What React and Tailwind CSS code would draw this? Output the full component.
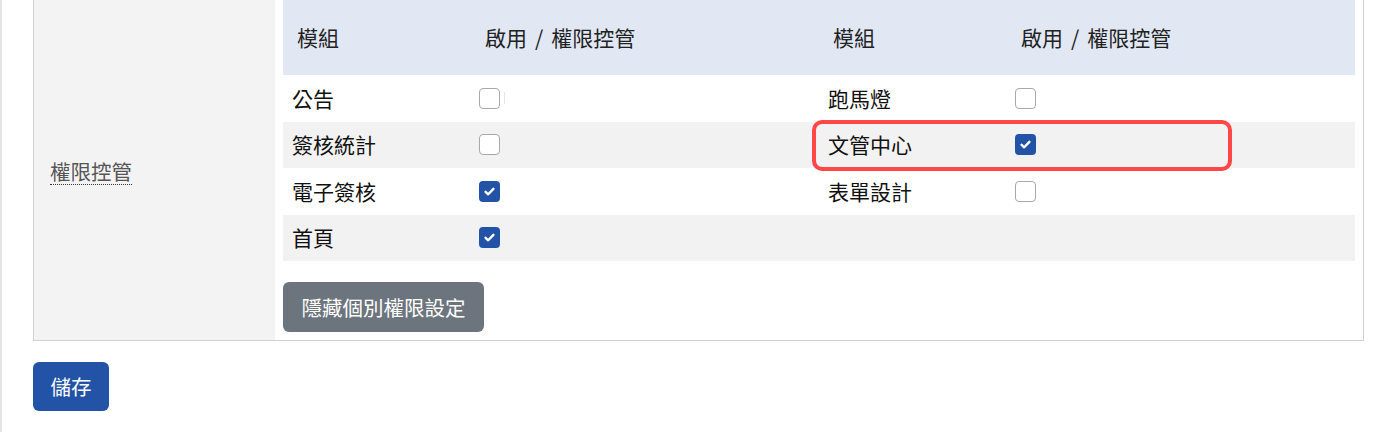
import React from "react";

const FONT = { fontFamily: '"Noto Sans CJK TC", "Noto Sans", sans-serif' };

function Box({ checked, caret }) {
  return (
    <div className="flex items-center">
      {checked ? (
        <span className="w-[21px] h-[21px] rounded-[4px] bg-[#2353a7] flex items-center justify-center">
          <svg width="13" height="13" viewBox="0 0 14 14" fill="none">
            <path d="M2.8 7.3l2.8 2.7 5.6-5.8" stroke="white" strokeWidth="2.6" strokeLinecap="round" strokeLinejoin="round" />
          </svg>
        </span>
      ) : (
        <span className="w-[21px] h-[21px] rounded-[4px] bg-white border border-[#a8a8a8]" />
      )}
      {caret && <span className="ml-[4px] w-px h-[12px] bg-[#e6e6e6]" />}
    </div>
  );
}

const rows = [
  { a: "公告", ac: false, caret: true, b: "跑馬燈", bc: false, bg: "bg-white" },
  { a: "簽核統計", ac: false, b: "文管中心", bc: true, bg: "bg-[#f2f2f2]" },
  { a: "電子簽核", ac: true, b: "表單設計", bc: false, bg: "bg-white" },
  { a: "首頁", ac: true, b: null, bg: "bg-[#f2f2f2]" },
];

export default function App() {
  return (
    <div className="w-[1400px] h-[432px] bg-white border-l-2 border-[#e3e3e3] pl-[31px] text-[21px] text-[#111]" style={FONT}>
      <div className="w-[1331px] flex border-x border-b border-[#d2d2d2]">
        <div className="w-[241px] bg-[#f3f3f3] flex items-center pl-[16px] pt-[3px]">
          <span className="text-[20.5px] text-[#555] leading-[25px] border-b border-dotted border-[#333]">權限控管</span>
        </div>
        <div className="flex-1 p-2 pt-0 relative">
          <div className="grid grid-cols-[188px_1fr_188px_1fr]">
            <div className="h-[75px] bg-[#e1e8f4] flex items-center pl-[14px] text-[#222]">模組</div>
            <div className="h-[75px] bg-[#e1e8f4] flex items-center pl-[14px] text-[#222]">啟用<span className="mx-[8px]">/</span>權限控管</div>
            <div className="h-[75px] bg-[#e1e8f4] flex items-center pl-[14px] text-[#222]">模組</div>
            <div className="h-[75px] bg-[#e1e8f4] flex items-center pl-[14px] text-[#222]">啟用<span className="mx-[8px]">/</span>權限控管</div>
            {rows.map((r, i) => (
              <React.Fragment key={i}>
                <div className={`h-[46.5px] ${r.bg} flex items-center pl-[9px]`}>{r.a}</div>
                <div className={`h-[46.5px] ${r.bg} flex items-center pl-[8px]`}>
                  <Box checked={r.ac} caret={r.caret} />
                </div>
                <div className={`h-[46.5px] ${r.bg} flex items-center pl-[9px]`}>{r.b}</div>
                <div className={`h-[46.5px] ${r.bg} flex items-center pl-[8px]`}>
                  {r.b && <Box checked={r.bc} />}
                </div>
              </React.Fragment>
            ))}
          </div>
          <button className="mt-[21px] w-[201px] h-[50px] rounded-[6px] bg-[#6c757d] text-white text-[20.5px] flex items-center justify-center">
            隱藏個別權限設定
          </button>
          <div className="absolute left-[537px] top-[120px] w-[420px] h-[51px] border-[4px] border-[#ff4747] rounded-[10px] pointer-events-none" />
        </div>
      </div>
      <button className="mt-[21px] w-[76px] h-[49px] rounded-[6px] bg-[#2353a7] text-white text-[20.5px] flex items-center justify-center">
        儲存
      </button>
    </div>
  );
}
